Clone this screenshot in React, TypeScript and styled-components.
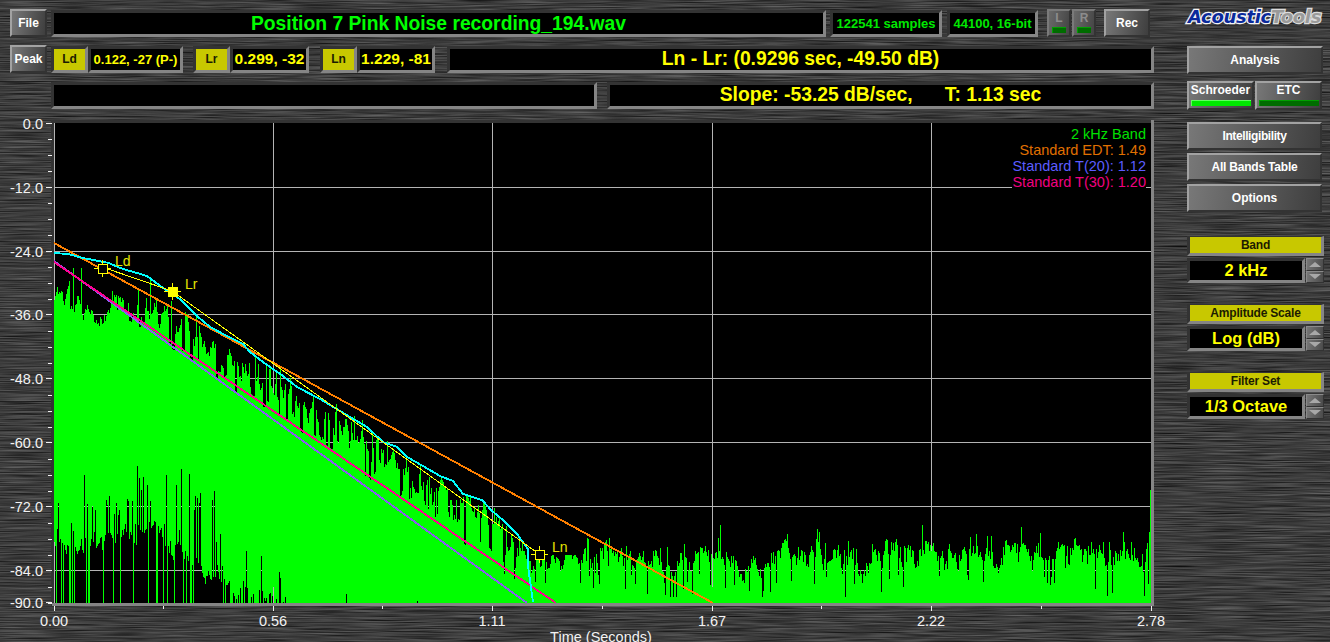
import React from "react";
import styled, { createGlobalStyle } from "styled-components";

const Global = createGlobalStyle`
  html, body { margin: 0; padding: 0; background: #3a3a3a; overflow: hidden; }
  * { box-sizing: border-box; }
`;

const Page = styled.div`
  position: relative;
  width: 1330px;
  height: 642px;
  overflow: hidden;
  display: flex;
  font-family: "Liberation Sans", Arial, sans-serif;
`;
const Texture = styled.svg`
  position: absolute;
  left: 0;
  top: 0;
  width: 1330px;
  height: 642px;
`;
const MainColumn = styled.div`
  position: relative;
  width: 1154px;
  display: flex;
  flex-direction: column;
  padding-top: 9px;
`;
const Row = styled.div<{ $top?: number; $left?: number; $h: number; $end?: boolean }>`
  display: flex;
  align-items: ${(p) => (p.$end ? "flex-end" : "center")};
  height: ${(p) => p.$h}px;
  margin-top: ${(p) => p.$top ?? 0}px;
  padding-left: ${(p) => p.$left ?? 10}px;
`;
const Button = styled.div<{ $w: number; $h?: number; $mr?: number; $ml?: number; $ls?: number }>`
  flex: none;
  width: ${(p) => p.$w}px;
  height: ${(p) => p.$h ?? 28}px;
  margin-right: ${(p) => p.$mr ?? 0}px;
  margin-left: ${(p) => p.$ml ?? 0}px;
  border: 2px solid;
  border-color: #a2a2a2 #333 #333 #a2a2a2;
  background: linear-gradient(100deg, #787878, #3e3e3e);
  color: #fff;
  font-size: 12px;
  font-weight: bold;
  letter-spacing: ${(p) => p.$ls ?? 0}px;
  display: flex;
  align-items: center;
  justify-content: center;
`;
const Panel = styled.div<{ $w: number; $h?: number; $mr?: number; $ml?: number; $c?: string; $size?: number }>`
  flex: none;
  width: ${(p) => p.$w}px;
  height: ${(p) => p.$h ?? 27}px;
  margin-right: ${(p) => p.$mr ?? 0}px;
  margin-left: ${(p) => p.$ml ?? 0}px;
  border: 3px solid;
  border-color: #333 #858585 #858585 #333;
  background: #000;
  color: ${(p) => p.$c ?? "#ffff00"};
  font-size: ${(p) => p.$size ?? 19.3}px;
  font-weight: bold;
  white-space: pre;
  display: flex;
  align-items: center;
  justify-content: center;
  overflow: hidden;
`;
const Tag = styled(Panel)`
  background: #c8c800;
  color: #1c1c00;
  font-size: 12px;
`;
const Meter = styled.div<{ $mr?: number }>`
  flex: none;
  width: 24px;
  height: 28px;
  margin-right: ${(p) => p.$mr ?? 0}px;
  border: 2px solid;
  border-color: #7a7a7a #333 #333 #7a7a7a;
  background: linear-gradient(100deg, #6a6a6a, #444);
  color: #8c8c8c;
  font-size: 12px;
  font-weight: bold;
  display: flex;
  flex-direction: column;
  align-items: center;
`;
const Led = styled.div<{ $on?: boolean; $w?: number }>`
  width: ${(p) => (p.$w ? `${p.$w}px` : "calc(100% - 6px)")};
  height: 6px;
  margin-top: auto;
  margin-bottom: 2px;
  border-top: 1px solid ${(p) => (p.$on ? "#60ff60" : "#00a000")};
  border-left: 1px solid ${(p) => (p.$on ? "#60ff60" : "#00a000")};
  background: ${(p) => (p.$on ? "#00e800" : "#006c00")};
`;
const ChartArea = styled.div`
  position: relative;
  margin-top: 2px;
  height: 530px;
`;
const ChartSvg = styled.svg`
  display: block;
  width: 1154px;
  height: 530px;
  overflow: visible;
`;
const Legend = styled.div`
  position: absolute;
  left: 1012px;
  top: 13px;
  width: 134px;
  background: #000;
  text-align: right;
  font-size: 14.5px;
  line-height: 16px;
  padding-top: 2px;
  padding-bottom: 2px;
`;
const LegendLine = styled.div<{ $c: string }>`
  color: ${(p) => p.$c};
  white-space: nowrap;
`;
const Sidebar = styled.div`
  position: relative;
  width: 176px;
  padding-left: 33px;
  display: flex;
  flex-direction: column;
`;
const Logo = styled.div`
  height: 46px;
  padding-top: 7px;
  padding-left: 1px;
  font-family: "DejaVu Sans", sans-serif;
  font-size: 18px;
  line-height: 20px;
  font-weight: bold;
  font-style: italic;
  letter-spacing: -0.3px;
  white-space: nowrap;
`;
const LogoPart = styled.span<{ $c: string; $o: string }>`
  color: ${(p) => p.$c};
  -webkit-text-stroke: 2.5px ${(p) => p.$o};
  paint-order: stroke fill;
`;
const SideButton = styled(Button)<{ $t?: number }>`
  margin-top: ${(p) => p.$t ?? 0}px;
`;
const Toggles = styled.div`
  display: flex;
  gap: 1px;
  margin-top: 7px;
  margin-bottom: 12px;
`;
const Toggle = styled.div<{ $w: number }>`
  width: ${(p) => p.$w}px;
  height: 29px;
  border: 2px solid;
  border-color: #a2a2a2 #333 #333 #a2a2a2;
  background: linear-gradient(100deg, #787878, #3e3e3e);
  color: #fff;
  font-size: 12px;
  font-weight: bold;
  display: flex;
  flex-direction: column;
  align-items: center;
  padding: 0 2px;
  line-height: 15px;
`;
const SelectGroup = styled.div<{ $t: number }>`
  margin-top: ${(p) => p.$t}px;
  display: grid;
  grid-template-columns: 118px 18px;
  column-gap: 1px;
`;
const SelectLabel = styled.div`
  grid-column: 1 / 3;
  height: 20px;
  margin-bottom: 2px;
  border: 3px solid;
  border-color: #333 #858585 #858585 #333;
  border-top-width: 1px;
  background: #c8c800;
  color: #1c1c00;
  font-size: 12px;
  font-weight: bold;
  letter-spacing: -0.2px;
  display: flex;
  align-items: center;
  justify-content: center;
`;
const SelectValue = styled(Panel)`
  width: 118px;
  height: 25px;
  font-size: 16.5px;
`;
const Spinner = styled.div`
  display: flex;
  flex-direction: column;
  height: 25px;
`;
const SpinBtn = styled.div`
  flex: 1;
  border: 1px solid;
  border-color: #8a8a8a #333 #333 #8a8a8a;
  background: linear-gradient(100deg, #777, #4a4a4a);
  display: flex;
  align-items: center;
  justify-content: center;
`;
const Tri = styled.div<{ $up?: boolean }>`
  width: 0;
  height: 0;
  border-left: 6px solid transparent;
  border-right: 6px solid transparent;
  ${(p) => (p.$up ? "border-bottom: 5px solid #a8a8a8;" : "border-top: 5px solid #a8a8a8;")}
`;

/* ---------- chart data ---------- */
function mulberry(a: number) {
  return () => {
    a |= 0;
    a = (a + 0x6d2b79f5) | 0;
    let t = Math.imul(a ^ (a >>> 15), 1 | a);
    t = (t + Math.imul(t ^ (t >>> 7), 61 | t)) ^ t;
    return ((t ^ (t >>> 14)) >>> 0) / 4294967296;
  };
}
type P = [number, number];
const cyan: P[] = [
  [54, 254],[68, 255],[83, 259],[109, 264],[120, 269],[147, 277],[163, 289],[180, 300],[197, 317],[210, 328],
  [227, 337],[243, 345],[250, 353],[263, 363],[283, 377],[297, 388],[320, 400],[350, 418],[367, 428],[383, 443],
  [397, 448],[407, 458],[423, 467],[440, 477],[453, 482],[463, 495],[482, 501],[492, 512],[503, 521],[517, 535],
  [528, 550],[528, 567],[533, 603],
];
const holeEnv: P[] = [
  [54, 525],[57, 500],[66, 490],[74, 465],[107, 457],[127, 450],[147, 457],[187, 470],[203, 483],[225, 500],
  [250, 500],[267, 537],[280, 573],[317, 580],[340, 592],[600, 603],
];
const holeBody: P[] = [
  [54, 545],[110, 540],[150, 530],[170, 548],[200, 572],[225, 586],[250, 592],[285, 601],[600, 604],
];
const offsets: P[] = [
  [54, 42],[100, 52],[150, 32],[200, 20],[300, 15],[540, 14],
];
const interp = (pts: P[], x: number) => {
  for (let i = 1; i < pts.length; i++) {
    if (x <= pts[i][0]) {
      const [a, b] = pts[i - 1];
      const [c, d] = pts[i];
      return c === a ? d : b + ((d - b) * (x - a)) / (c - a);
    }
  }
  return pts[pts.length - 1][1];
};
const linePath = (pts: P[]) => "M" + pts.map((p) => p.join(" ")).join("L");

const greenPath = (() => {
  const r = mulberry(194);
  let walk = 0;
  let fl = 0;
  let hw = 0;
  let deep = 0;
  let deepDepth = 0;
  let d = "";
  for (let x = 54; x < 1151; x++) {
    walk = walk * 0.8 + (r() - 0.5) * 16;
    fl = fl * 0.86 + (r() - 0.5) * 15;
    hw = hw * 0.75 + (r() - 0.5) * 14;
    let floor = 556 + fl + (r() - 0.5) * 10;
    const f = r();
    if (f < 0.1) floor -= r() * 20;
    else if (f < 0.2) floor += 8 + r() * 26;
    floor = Math.min(floor, 598);
    if (x > 544 && x < 576) floor = Math.max(floor, 556);
    let top: number;
    if (x < 540) {
      const pink = 263 + (x - 54) * 0.677;
      const c = interp(cyan, x);
      const off = interp(offsets, x);
      top = c + off + walk;
      if (deep > 0) {
        top = top + deepDepth * Math.max(0, pink - top + 8);
        deep--;
      } else {
        const s = r();
        if (s < 0.14) top = c + off - r() * (off + 6);
        else if (s < 0.36) {
          deep = Math.floor(r() * 3);
          deepDepth = 0.3 + r() * 0.7;
          top = top + deepDepth * Math.max(0, pink - top + 8);
        }
      }
      top = Math.min(top, floor);
    } else {
      top = floor;
    }
    if (x === 1150) top = 491;
    if (x === 1149) top = 533;
    let bot = 604;
    const env = interp(holeEnv, x);
    const body = interp(holeBody, x);
    if (x < 290) {
      if (r() < (x < 225 ? 0.82 : 0.45)) {
        bot = r() < 0.3 ? env + r() * (body - env) : body + hw;
      }
    } else if (x < 700 && r() < 0.02) {
      bot = env + r() * 8;
    }
    bot = Math.min(bot, 604);
    d += `M${x + 0.5} ${Math.round(top)}V${Math.round(bot)}`;
  }
  return d;
})();

const yLabels: [string, number][] = [
  ["0.0", 124],["-12.0", 188],["-24.0", 252],["-36.0", 315],["-48.0", 379],["-60.0", 443],["-72.0", 507],["-84.0", 571],["-90.0", 603],
];
const xLabels: [string, number][] = [
  ["0.00", 54],["0.56", 273],["1.11", 492],["1.67", 712],["2.22", 931],["2.78", 1151],
];
const xMinor = [163, 382, 602, 821, 1041];
const yMinor: number[] = [];
for (let i = 0; i <= 30; i++) if (i % 4 !== 0) yMinor.push(Math.round(124 + i * 16));

const Marker = ({ x, y, filled }: { x: number; y: number; filled?: boolean }) => (
  <g shapeRendering="crispEdges">
    <path d={`M${x - 8} ${y + 0.5}H${x + 9}M${x + 0.5} ${y - 8}V${y + 9}`} stroke="#ffff00" strokeWidth={1} />
    <rect x={x - 4} y={y - 4} width={9} height={9} fill={filled ? "#ffff00" : "#000"} stroke="#ffff00" />
  </g>
);

const Chart = () => (
  <ChartSvg viewBox="0 112 1154 530">
    <rect x={51} y={121} width={1103} height={3} fill="#333" />
    <rect x={51} y={121} width={3} height={486} fill="#333" />
    <rect x={54} y={124} width={1097} height={480} fill="#000" />
    <rect x={1151} y={121} width={3} height={486} fill="#858585" />
    <g stroke="#b4b4b4" strokeWidth={1} shapeRendering="crispEdges">
      <path d="M54.5 124V604" />
      {xLabels.slice(1, 5).map(([t, x]) => (
        <path key={t} d={`M${x + 0.5} 124V604`} />
      ))}
      {yLabels.slice(1, 8).map(([t, y]) => (
        <path key={t} d={`M54 ${y + 0.5}H1151`} />
      ))}
    </g>
    <path d={greenPath} stroke="#00ff00" strokeWidth={1} fill="none" shapeRendering="crispEdges" />
    <g fill="none" strokeWidth={1.9} shapeRendering="crispEdges">
      <path d="M54 262L527 604" stroke="#8a5cf0" />
      <path d="M54 263L556 604" stroke="#ff0090" />
      <path d="M54 244L713 604" stroke="#ff8000" />
      <path d={linePath(cyan)} stroke="#00ffff" />
      <path d="M102 268L172 292L539 555" stroke="#ffff00" strokeWidth={1} />
    </g>
    <Marker x={102} y={269} />
    <Marker x={172} y={292} filled />
    <Marker x={539} y={555} />
    <g fill="#e4e400" fontSize={14}>
      <text x={115} y={267}>Ld</text>
      <text x={185} y={290}>Lr</text>
      <text x={552} y={553}>Ln</text>
    </g>
    <rect x={52} y={604} width={1102} height={3} fill="#858585" />
    <g stroke="#f0f0f0" strokeWidth={1} shapeRendering="crispEdges">
      {yLabels.map(([t, y]) => (
        <path key={t} d={`M46 ${y + 0.5}H52`} />
      ))}
      {yMinor.map((y) => (
        <path key={y} d={`M48 ${y + 0.5}H52`} />
      ))}
      {xLabels.map(([t, x]) => (
        <path key={t} d={`M${x + 0.5} 607V612`} />
      ))}
      {xMinor.map((x) => (
        <path key={x} d={`M${x + 0.5} 607V610`} />
      ))}
    </g>
    <g fill="#f2f2f2" fontSize={14.5}>
      {yLabels.map(([t, y]) => (
        <text key={t} x={43} y={y + 6} textAnchor="end">{t}</text>
      ))}
      {xLabels.map(([t, x]) => (
        <text key={t} x={x} y={627} textAnchor="middle">{t}</text>
      ))}
      <text x={601} y={643} textAnchor="middle">Time (Seconds)</text>
    </g>
  </ChartSvg>
);

const Select = ({ t, label, value }: { t: number; label: string; value: string }) => (
  <SelectGroup $t={t}>
    <SelectLabel>{label}</SelectLabel>
    <SelectValue $w={118} $h={25}>{value}</SelectValue>
    <Spinner>
      <SpinBtn><Tri $up /></SpinBtn>
      <SpinBtn><Tri /></SpinBtn>
    </Spinner>
  </SelectGroup>
);

export default function App() {
  return (
    <Page>
      <Global />
      <Texture>
        <filter id="brushed" x="0" y="0" width="100%" height="100%" colorInterpolationFilters="sRGB">
          <feTurbulence type="fractalNoise" baseFrequency="0.02 0.8" numOctaves={2} seed={7} />
          <feColorMatrix values="0.42 0 0 0 0.025  0.42 0 0 0 0.025  0.42 0 0 0 0.025  0 0 0 0 1" />
        </filter>
        <rect width="1330" height="642" filter="url(#brushed)" />
      </Texture>
      <MainColumn>
        <Row $h={28} $end>
          <Button $w={37} $mr={4}>File</Button>
          <Panel $w={775} $mr={4} $c="#00ff00">Position 7 Pink Noise recording_194.wav</Panel>
          <Panel $w={112} $mr={5} $c="#00e800" $size={13}>122541 samples</Panel>
          <Panel $w={91} $mr={9} $c="#00e800" $size={13}>44100, 16-bit</Panel>
          <Meter $mr={1}>L<Led /></Meter>
          <Meter $mr={8}>R<Led /></Meter>
          <Button $w={46}>Rec</Button>
        </Row>
        <Row $h={28} $top={8}>
          <Button $w={37} $mr={4}>Peak</Button>
          <Tag $w={37}>Ld</Tag>
          <Panel $w={95} $mr={10} $size={13}>0.122, -27 (P-)</Panel>
          <Tag $w={37}>Lr</Tag>
          <Panel $w={79} $mr={11} $size={15.5}>0.299, -32</Panel>
          <Tag $w={37}>Ln</Tag>
          <Panel $w={78} $mr={12} $size={15.5}>1.229, -81</Panel>
          <Panel $w={707}>Ln - Lr: (0.9296 sec, -49.50 dB)</Panel>
        </Row>
        <Row $h={28} $top={8} $left={51}>
          <Panel $w={546} $mr={10} />
          <Panel $w={547}>{"Slope: -53.25 dB/sec,      T: 1.13 sec"}</Panel>
        </Row>
        <ChartArea>
          <Chart />
          <Legend>
            <LegendLine $c="#00e000">2 kHz Band</LegendLine>
            <LegendLine $c="#e07000">Standard EDT: 1.49</LegendLine>
            <LegendLine $c="#5c5cff">Standard T(20): 1.12</LegendLine>
            <LegendLine $c="#f00080">Standard T(30): 1.20</LegendLine>
          </Legend>
        </ChartArea>
      </MainColumn>
      <Sidebar>
        <Logo>
          <LogoPart $c="#0a2a9c" $o="#f4f4f4">Acoustic</LogoPart>
          <LogoPart $c="#9a9a9a" $o="#dcdcdc">Tools</LogoPart>
        </Logo>
        <SideButton $w={136}>Analysis</SideButton>
        <Toggles>
          <Toggle $w={67}>Schroeder<Led $on $w={60} /></Toggle>
          <Toggle $w={67}>ETC<Led $w={60} /></Toggle>
        </Toggles>
        <SideButton $w={135} $ls={-0.4}>Intelligibility</SideButton>
        <SideButton $w={135} $t={3} $ls={-0.2}>All Bands Table</SideButton>
        <SideButton $w={135} $t={3}>Options</SideButton>
        <Select t={24} label="Band" value="2 kHz" />
        <Select t={21} label="Amplitude Scale" value="Log (dB)" />
        <Select t={21} label="Filter Set" value="1/3 Octave" />
      </Sidebar>
    </Page>
  );
}
